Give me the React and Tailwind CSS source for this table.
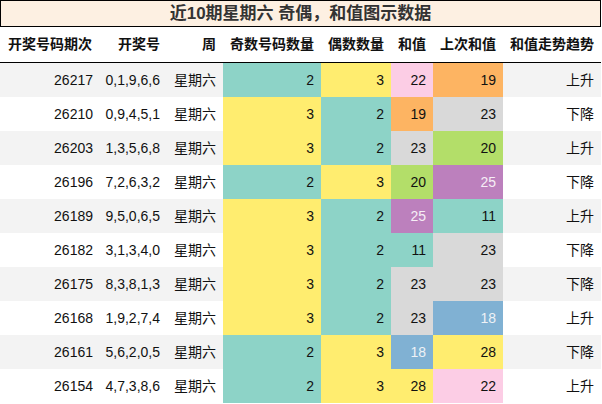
import React from 'react';

const headers = ['开奖号码期次', '开奖号', '周', '奇数号码数量', '偶数数量', '和值', '上次和值', '和值走势趋势'];

const rows = [
  ['26217', '0,1,9,6,6', 2, 3, 22, 19, '上升'],
  ['26210', '0,9,4,5,1', 3, 2, 19, 23, '下降'],
  ['26203', '1,3,5,6,8', 3, 2, 23, 20, '上升'],
  ['26196', '7,2,6,3,2', 2, 3, 20, 25, '下降'],
  ['26189', '9,5,0,6,5', 3, 2, 25, 11, '上升'],
  ['26182', '3,1,3,4,0', 3, 2, 11, 23, '下降'],
  ['26175', '8,3,8,1,3', 3, 2, 23, 23, '下降'],
  ['26168', '1,9,2,7,4', 3, 2, 23, 18, '上升'],
  ['26161', '5,6,2,0,5', 2, 3, 18, 28, '下降'],
  ['26154', '4,7,3,8,6', 2, 3, 28, 22, '上升'],
];

// set3 palette, picked by value
const countColor = { 2: 'bg-[#8dd3c7]', 3: 'bg-[#ffed6f]' };
const sumColor = {
  11: 'bg-[#8dd3c7] text-[#111]',
  18: 'bg-[#80b1d3] text-[#eef2f6]',
  19: 'bg-[#fdb462] text-[#111]',
  20: 'bg-[#b3de69] text-[#111]',
  22: 'bg-[#fccde5] text-[#111]',
  23: 'bg-[#d9d9d9] text-[#111]',
  25: 'bg-[#bc80bd] text-[#f6eef6]',
  28: 'bg-[#ffed6f] text-[#111]',
};

const cell = 'flex items-center justify-end pr-[7px]';

export default function App() {
  return (
    <div
      className="w-[602px] h-[404px] bg-white text-[14px] text-[#111]"
      style={{ fontFamily: "'Liberation Sans', 'Noto Sans CJK SC', sans-serif" }}
    >
      <div className="w-[601px] h-[27px] border border-black bg-[#fdf0e2] flex items-center justify-center">
        <span className="text-[17px] font-bold text-[#333]">近10期星期六 奇偶，和值图示数据</span>
      </div>

      <div className="grid grid-cols-[100px_67px_56px_98px_70px_42px_70px_98px] w-[601px]">
        {headers.map((h, i) => (
          <div key={h} className={`h-[36px] font-bold border-b border-black ${i === 0 ? 'flex items-center justify-center' : cell}`}>
            {h}
          </div>
        ))}

        {rows.map((r, idx) => {
          const base = idx % 2 === 0 ? 'bg-[#f3f3f3]' : 'bg-white';
          return (
            <React.Fragment key={r[0]}>
              <div className={`h-[34px] ${cell} ${base}`}>{r[0]}</div>
              <div className={`${cell} ${base}`}>{r[1]}</div>
              <div className={`${cell} ${base}`}>星期六</div>
              <div className={`${cell} ${countColor[r[2]]}`}>{r[2]}</div>
              <div className={`${cell} ${countColor[r[3]]}`}>{r[3]}</div>
              <div className={`${cell} ${sumColor[r[4]]}`}>{r[4]}</div>
              <div className={`${cell} ${sumColor[r[5]]}`}>{r[5]}</div>
              <div className={`${cell} ${base}`}>{r[6]}</div>
            </React.Fragment>
          );
        })}
      </div>
    </div>
  );
}
